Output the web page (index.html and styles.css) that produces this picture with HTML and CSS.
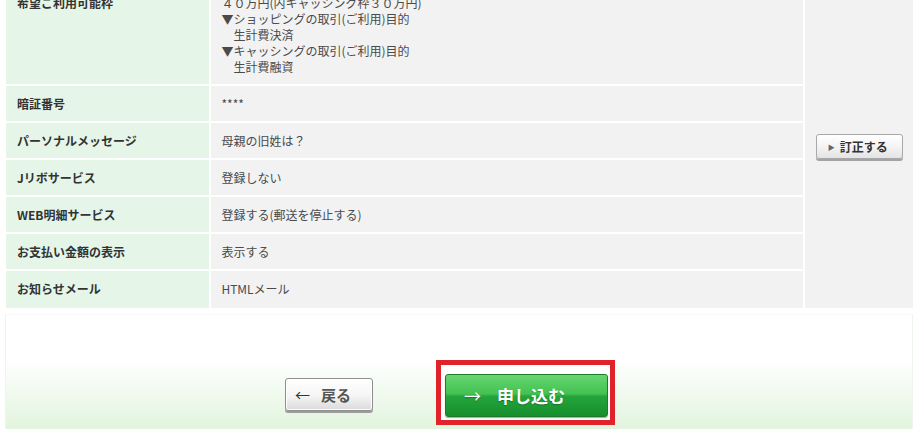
FILE: index.html
```html
<!DOCTYPE html>
<html lang="ja">

<head>
    <meta charset="UTF-8">
    <meta name="viewport" content="width=device-width, initial-scale=1.0">
    <title>お申し込み内容の確認</title>
    <link rel="stylesheet" href="styles.css">
</head>

<body>
    <main class="confirm">
        <table class="info">
            <tr>
                <th>希望ご利用可能枠</th>
                <td>
                    <div>４０万円(内キャッシング枠３０万円)</div>
                    <div>▼ショッピングの取引(ご利用)目的</div>
                    <div class="indent">生計費決済</div>
                    <div>▼キャッシングの取引(ご利用)目的</div>
                    <div class="indent">生計費融資</div>
                </td>
                <td class="fix-cell" rowspan="7">
                    <button class="btn-fix" type="button"><span class="tri">&#9654;</span>訂正する</button>
                </td>
            </tr>
            <tr>
                <th>暗証番号</th>
                <td>****</td>
            </tr>
            <tr>
                <th>パーソナルメッセージ</th>
                <td>母親の旧姓は？</td>
            </tr>
            <tr>
                <th>Jリボサービス</th>
                <td>登録しない</td>
            </tr>
            <tr>
                <th>WEB明細サービス</th>
                <td>登録する(郵送を停止する)</td>
            </tr>
            <tr>
                <th>お支払い金額の表示</th>
                <td>表示する</td>
            </tr>
            <tr class="last">
                <th>お知らせメール</th>
                <td>HTMLメール</td>
            </tr>
        </table>

        <section class="actions">
            <button class="btn-back" type="button"><span class="arrow">&larr;</span>戻る</button>
            <div class="apply-frame">
                <button class="btn-apply" type="button"><span class="arrow">&rarr;</span>申し込む</button>
            </div>
        </section>
    </main>
</body>

</html>
```

FILE: styles.css
```css
html, body {
    margin: 0;
    padding: 0;
    background-color: #fff;
}

body {
    font-family: "Noto Sans CJK JP", "Noto Sans", sans-serif;
    font-size: 12px;
    line-height: 16px;
    color: #4a4a4a;
    overflow: hidden;
}

/* the page is scrolled a bit, so the first row starts above the top */
.confirm {
    margin-top: -15px;
}

.info {
    margin-left: 6px;
    width: 907px;
    border-collapse: separate;
    border-spacing: 0;
    table-layout: fixed;
}

.info th,
.info td {
    padding: 10px 0 9px 10px;
    vertical-align: top;
    text-align: left;
    border-bottom: 2px solid #fff;
}

.info th {
    width: 192px;
    padding-left: 11px;
    background-color: #e5f6e9;
    color: #333;
    font-weight: bold;
    border-right: 2px solid #fff;
}

.info td {
    width: 580px;
    background-color: #f2f2f2;
    border-right: 2px solid #fff;
}

.info tr.last th,
.info tr.last td {
    padding-bottom: 11px;
    border-bottom: 0;
}

.info .indent {
    padding-left: 12px;
}

.info td.fix-cell {
    width: 108px;
    padding: 0;
    border: 0;
    vertical-align: middle;
    text-align: center;
}

.btn-fix {
    width: 87px;
    height: 25px;
    margin-left: 1px;
    padding: 0 3px 0 0;
    border: 1px solid #a8a8a8;
    border-radius: 3px;
    background: linear-gradient(#ffffff, #f4f4f4 50%, #e4e4e4);
    box-shadow: 0 2px 0 #a3a3a3;
    font-family: inherit;
    font-size: 12px;
    font-weight: bold;
    color: #333;
    cursor: pointer;
}

.btn-fix .tri {
    font-size: 7px;
    color: #666;
    margin-right: 5px;
    vertical-align: 2px;
}

/* bottom panel with the two buttons */
.actions {
    display: flex;
    align-items: center;
    margin: 6px 2px 0 5px;
    padding: 45px 0 30px 279px;
    border: 1px solid #edf5ec;
    border-top: 1px solid #f7faf7;
    border-bottom: 0;
    background: linear-gradient(#ffffff 0, #ffffff 45px, #e1f4dd 115px);
}

.btn-back {
    width: 88px;
    height: 33px;
    margin-top: 4px;
    margin-right: 63px;
    padding: 0 0 0 9px;
    text-align: left;
    border: 1px solid #8e8e8e;
    border-radius: 3px;
    background: linear-gradient(#ffffff, #f5f5f5 55%, #dadada);
    box-shadow: 0 2px 0 #9c9c9c, inset 0 0 0 1px #fff;
    font-family: inherit;
    font-size: 15px;
    font-weight: bold;
    color: #555;
    cursor: pointer;
}

.btn-back .arrow {
    font-weight: normal;
    color: #333;
    margin-right: 11px;
}

.apply-frame {
    padding: 9px 2px 3px 4px;
    border: 5px solid #e0232b;
    background-color: #fff;
}

.btn-apply {
    display: block;
    width: 163px;
    height: 43px;
    padding: 0 0 0 18px;
    text-align: left;
    border: 1px solid #1b7d2c;
    border-radius: 3px;
    background: linear-gradient(#66d66f 0, #43c152 46%, #25a43b 52%, #168f2d 100%);
    box-shadow: 0 1px 1px rgba(0, 0, 0, 0.35);
    font-family: inherit;
    font-size: 17px;
    font-weight: bold;
    color: #fff;
    text-shadow: 0 1px 1px rgba(0, 0, 0, 0.25);
    cursor: pointer;
}

.btn-apply .arrow {
    font-weight: normal;
    margin-right: 16px;
}
```
